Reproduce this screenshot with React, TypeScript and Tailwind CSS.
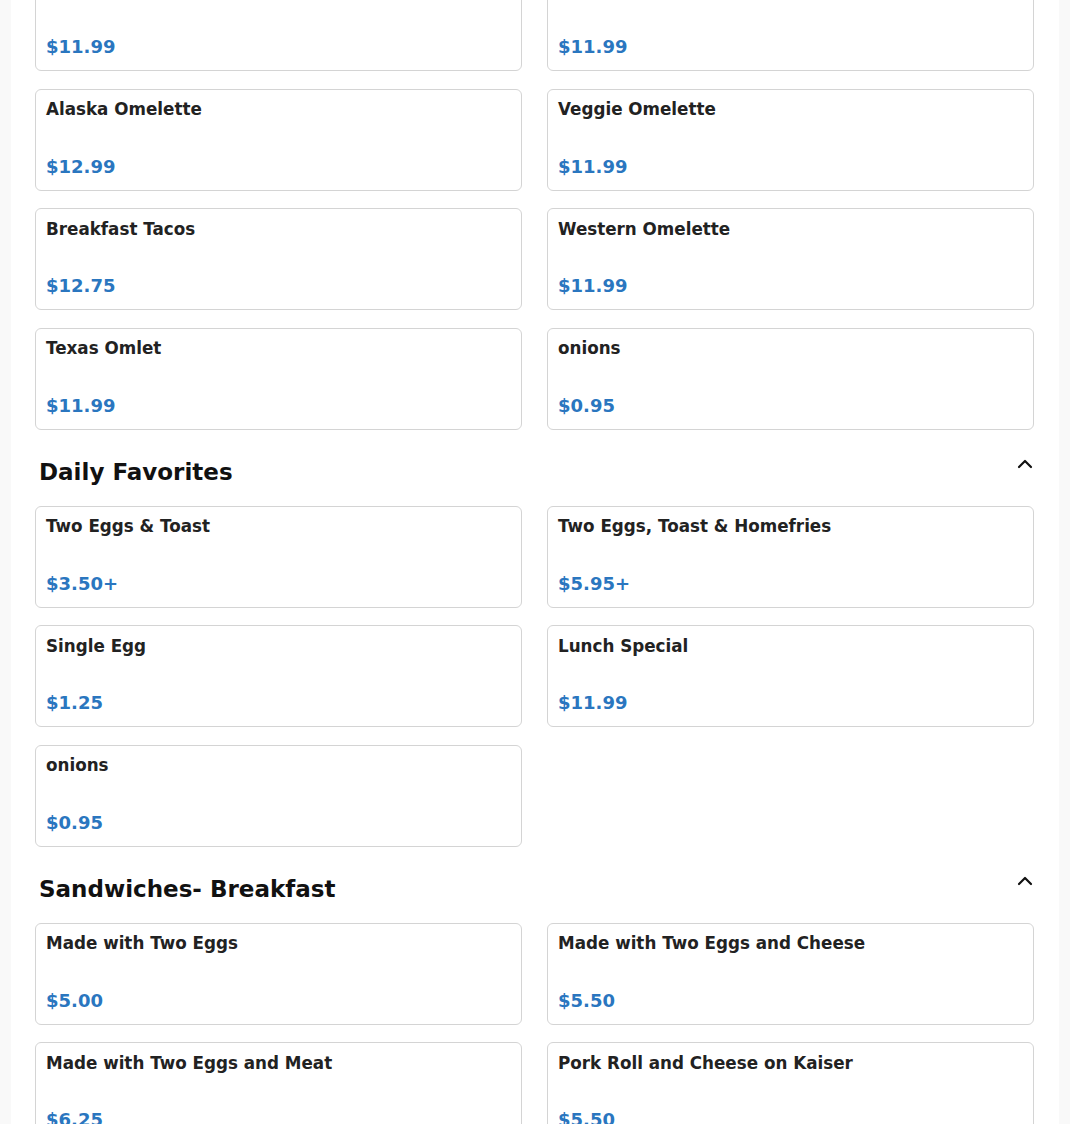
import React from 'react';
import { ChevronUp } from 'lucide-react';

type Item = { name: string; price: string };

const omelettes: Item[] = [
    { name: 'Turkey Omelette', price: '$11.99' },
    { name: 'Bacon & Egg Omelette', price: '$11.99' },
    { name: 'Alaska Omelette', price: '$12.99' },
    { name: 'Veggie Omelette', price: '$11.99' },
    { name: 'Breakfast Tacos', price: '$12.75' },
    { name: 'Western Omelette', price: '$11.99' },
    { name: 'Texas Omlet', price: '$11.99' },
    { name: 'onions', price: '$0.95' },
];

const favorites: Item[] = [
    { name: 'Two Eggs & Toast', price: '$3.50+' },
    { name: 'Two Eggs, Toast & Homefries', price: '$5.95+' },
    { name: 'Single Egg', price: '$1.25' },
    { name: 'Lunch Special', price: '$11.99' },
    { name: 'onions', price: '$0.95' },
];

const sandwiches: Item[] = [
    { name: 'Made with Two Eggs', price: '$5.00' },
    { name: 'Made with Two Eggs and Cheese', price: '$5.50' },
    { name: 'Made with Two Eggs and Meat', price: '$6.25' },
    { name: 'Pork Roll and Cheese on Kaiser', price: '$5.50' },
    { name: 'Bacon, Egg and Cheese', price: '$6.25' },
    { name: 'Sausage, Egg and Cheese', price: '$6.25' },
];

const ItemCard: React.FC<{ item: Item }> = ({ item }) => (
    <div className="h-[102px] flex flex-col justify-between rounded-md border border-[#d4d4d4] bg-white px-2.5 pt-[10.5px] pb-[13px]">
        <div className="text-[16.75px] leading-[19px] font-bold text-[#222222]">{item.name}</div>
        <div className="text-lg leading-[21px] font-bold text-[#2a76bf]">{item.price}</div>
    </div>
);

const Grid: React.FC<{ items: Item[]; className?: string }> = ({ items, className = '' }) => (
    <div className={`grid grid-cols-2 gap-x-[25px] gap-y-[17.5px] ${className}`}>
        {items.map((it, i) => (
            <ItemCard key={i} item={it} />
        ))}
    </div>
);

const SectionHeader: React.FC<{ title: string }> = ({ title }) => (
    <div className="mt-[22px] mb-[18px] flex items-start justify-between pl-1 -mr-[3px]">
        <h2 className="pt-1 text-[23px] leading-8 font-bold text-[#111111]">{title}</h2>
        <button className="text-[#111111]">
            <ChevronUp size={24} strokeWidth={2.2} />
        </button>
    </div>
);

export default function App() {
    return (
        <div className="min-h-screen bg-[#f9f9f9] overflow-hidden" style={{ fontFamily: '"DejaVu Sans", sans-serif' }}>
            <div className="mx-auto w-[1048px] min-h-screen bg-white pl-6 pr-[25px] pb-10">
                <Grid items={omelettes} className="-mt-[31px]" />
                <SectionHeader title="Daily Favorites" />
                <Grid items={favorites} />
                <SectionHeader title="Sandwiches- Breakfast" />
                <Grid items={sandwiches} />
            </div>
        </div>
    );
}
